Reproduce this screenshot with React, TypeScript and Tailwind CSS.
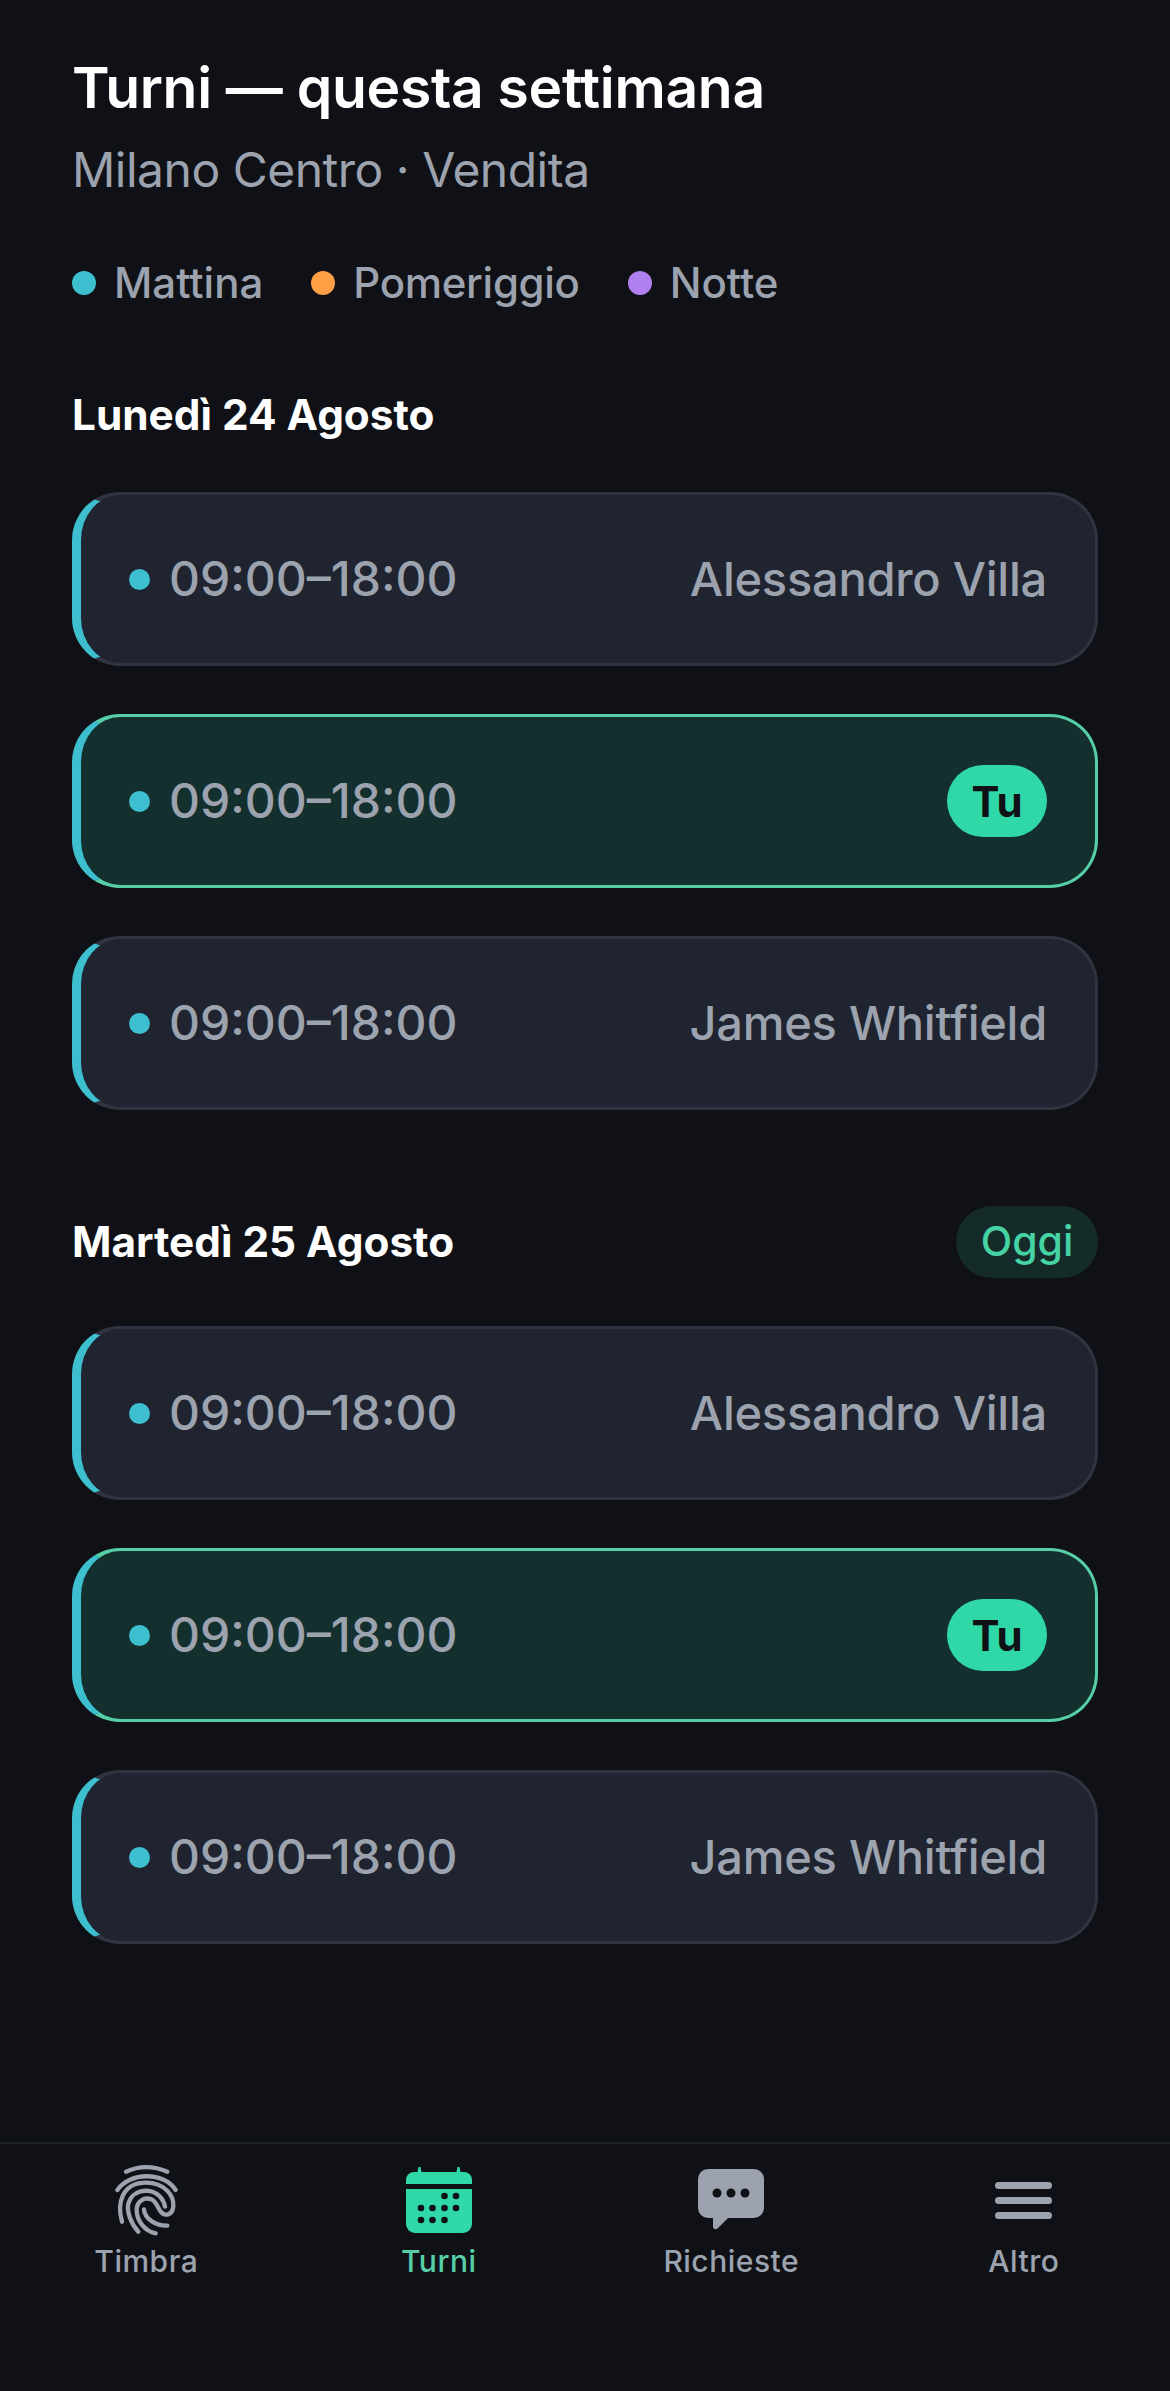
const shiftsByDay = [
  { label: "Lunedì 24 Agosto", today: false },
  { label: "Martedì 25 Agosto", today: true },
]

const people = ["Alessandro Villa", null, "James Whitfield"]

function FingerprintIcon() {
  return (
    <svg viewBox="0 0 216 240" className="w-[72px] h-[80px]" fill="none" stroke="#9ca3af" strokeWidth="13" strokeLinecap="round">
      <path d="M48 35 Q108 8 172 35" />
      <path d="M22 90 C60 36 160 34 197 90" />
      <path d="M36 185 C20 130 36 68 108 68 C165 68 192 108 190 138 C188 166 164 172 150 152 C140 136 138 124 124 118 C102 110 80 124 80 150 C80 182 104 214 137 220" />
      <path d="M85 215 C62 190 50 155 55 130 C64 102 88 92 110 92 C140 94 160 114 165 140" />
      <path d="M172 197 C140 198 104 178 102 148" />
    </svg>
  )
}

function CalendarIcon() {
  return (
    <svg viewBox="0 0 66 66" className="w-[66px] h-[66px]">
      <path d="M11.500 5l1-5h2l1 5zM50.500 5l1-5h2l1 5z" fill="#2fd8a6" />
      <path d="M8 5h50a8 8 0 0 1 8 8v4H0v-4a8 8 0 0 1 8-8z" fill="#2fd8a6" />
      <path d="M0 22h66v35a9 9 0 0 1-9 9H9a9 9 0 0 1-9-9z" fill="#2fd8a6" />
      {[
        [38.500, 29], [50, 29],
        [15, 41], [26.500, 41], [38.500, 41], [50, 41],
        [15, 53], [26.500, 53], [38.500, 53],
      ].map(([cx, cy]) => (
        <circle key={`${cx}-${cy}`} cx={cx} cy={cy} r="3.300" fill="#0f1116" />
      ))}
    </svg>
  )
}

function ChatIcon() {
  return (
    <svg viewBox="0 0 66 62" className="w-[66px] h-[62px]">
      <path d="M10 0h46a10 10 0 0 1 10 10v29a10 10 0 0 1-10 10H30L19.500 59.500c-2 1.500-4.500 .5-4.500-2V49h-5A10 10 0 0 1 0 39V10A10 10 0 0 1 10 0z" fill="#9ca3af" />
      <circle cx="19" cy="24" r="4.500" fill="#0f1116" />
      <circle cx="33" cy="24" r="4.500" fill="#0f1116" />
      <circle cx="47" cy="24" r="4.500" fill="#0f1116" />
    </svg>
  )
}

function MenuIcon() {
  return (
    <div className="flex flex-col gap-[8px] w-[57px]">
      <div className="h-[7px] rounded-full bg-[#9ca3af]" />
      <div className="h-[7px] rounded-full bg-[#9ca3af]" />
      <div className="h-[7px] rounded-full bg-[#9ca3af]" />
    </div>
  )
}

function ShiftCard({ name }: { name: string | null }) {
  const mine = name === null
  return (
    <div
      className={
        mine
          ? "flex items-center justify-between h-[174px] pl-[48px] pr-[48px] rounded-[48px] border-[3px] border-l-[9px] border-[#56cfa6] border-l-[#3dbfcf] bg-[#14302e]"
          : "flex items-center justify-between h-[174px] pl-[48px] pr-[48px] rounded-[48px] border-[3px] border-l-[9px] border-[#2f3440] border-l-[#3dbfcf] bg-[#1f2430]"
      }
    >
      <div className="flex items-center gap-[19px]">
        <span className="w-[21px] h-[21px] rounded-full bg-[#3dbfcf]" />
        <span className="text-[48px] text-[#9ca3af] font-medium">09:00–18:00</span>
      </div>
      {mine ? (
        <span className="flex items-center justify-center w-[100px] h-[72px] rounded-full bg-[#2fd8a6] text-[42px] font-bold text-[#0f1116]">Tu</span>
      ) : (
        <span className="text-[47px] tracking-[-0.25px] text-[#9ca3af] font-medium">{name}</span>
      )}
    </div>
  )
}

function NavItem({ label, active, icon }: { label: string; active?: boolean; icon: React.ReactNode }) {
  return (
    <div className="flex flex-col items-center">
      <div className="flex items-center justify-center h-[72px]">{icon}</div>
      <span className={active ? "mt-[3px] text-[30px] tracking-[0.5px] text-[#56cfa6] font-medium" : "mt-[3px] text-[30px] tracking-[0.5px] text-[#9ca3af] font-medium"}>
        {label}
      </span>
    </div>
  )
}

export default function App() {
  return (
    <div className="flex flex-col w-[1170px] h-[2391px] bg-[#0f1116] font-['Inter',sans-serif]">
      <div className="flex-1 px-[72px] pt-[48px]">
        <h1 className="text-[57px] font-semibold leading-[80px] tracking-[-0.3px] text-white">Turni — questa settimana</h1>
        <p className="text-[48px] leading-[60px] mt-[12px] tracking-[-0.5px] text-[#9ca3af]">Milano Centro · Vendita</p>

        <div className="flex items-center gap-[48px] mt-[57px]">
          <div className="flex items-center gap-[18px]">
            <span className="w-[24px] h-[24px] rounded-full bg-[#3dbfcf]" />
            <span className="text-[42px] leading-[51px] text-[#9ca3af] font-medium">Mattina</span>
          </div>
          <div className="flex items-center gap-[18px]">
            <span className="w-[24px] h-[24px] rounded-full bg-[#ff9f45]" />
            <span className="text-[42px] leading-[51px] tracking-[-0.3px] text-[#9ca3af] font-medium">Pomeriggio</span>
          </div>
          <div className="flex items-center gap-[18px]">
            <span className="w-[24px] h-[24px] rounded-full bg-[#b07ff0]" />
            <span className="text-[42px] leading-[51px] text-[#9ca3af] font-medium">Notte</span>
          </div>
        </div>

        <div className="flex flex-col mt-[78px] gap-[96px]">
          {shiftsByDay.map((day) => (
            <section key={day.label}>
              <div className="flex items-center justify-between mb-[48px]">
                <h2 className="text-[42.3px] leading-[58px] font-bold text-white">{day.label}</h2>
                {day.today && (
                  <span className="flex items-center justify-center w-[142px] h-[72px] rounded-full bg-[#152b2a] text-[41px] text-[#45d3a4] font-medium">Oggi</span>
                )}
              </div>
              <div className="flex flex-col gap-[48px]">
                {people.map((name, i) => (
                  <ShiftCard key={i} name={name} />
                ))}
              </div>
            </section>
          ))}
        </div>
      </div>

      <nav className="grid grid-cols-4 h-[249px] pt-[20px] border-t-[2px] border-[#1f222a]">
        <NavItem label="Timbra" icon={<FingerprintIcon />} />
        <NavItem label="Turni" active icon={<CalendarIcon />} />
        <NavItem label="Richieste" icon={<ChatIcon />} />
        <NavItem label="Altro" icon={<MenuIcon />} />
      </nav>
    </div>
  )
}
